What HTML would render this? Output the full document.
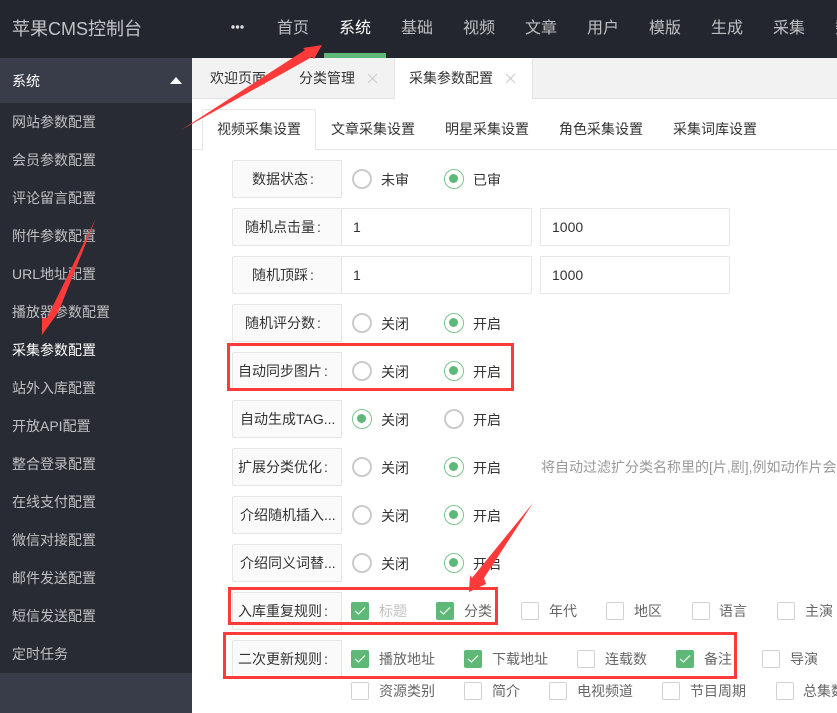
<!DOCTYPE html>
<html lang="zh-CN">
<head>
<meta charset="utf-8">
<title>苹果CMS控制台</title>
<style>
html,body{margin:0;padding:0;width:837px;height:713px;overflow:hidden;background:#fff}
body{position:relative;font-family:"Liberation Sans","Noto Sans CJK SC",sans-serif;font-size:14px;color:#333}
.a,.n,.s,.t,.l,.i,.r,.c,.x,.v,.w{position:absolute;white-space:nowrap}
#hd{position:absolute;left:0;top:0;width:837px;height:58px;background:#23262f;overflow:hidden}
.n{top:0;height:58px;line-height:57px;font-size:16px;color:rgba(255,255,255,.7);width:62px;text-align:center}
#sb{position:absolute;left:0;top:58px;width:192px;height:655px;background:#282b33}
.s{left:12px;line-height:20px;color:rgba(255,255,255,.7)}
.t{line-height:20px;color:#333}
.l{left:232px;width:108px;height:36px;line-height:36px;border:1px solid #e6e6e6;background:#fafafa;text-align:center;border-radius:2px 0 0 2px;color:#333}
.l b{font-weight:normal;display:inline-block;width:12px;padding-left:2px;text-align:left}
.l.e{text-align:left;text-indent:7px}
.i{height:36px;line-height:36px;border:1px solid #e6e6e6;background:#fff;padding-left:11px;box-sizing:content-box;border-radius:0 2px 2px 0;color:#333;font-size:14px}
.r{width:20px;height:20px;box-sizing:border-box;border:2px solid #cbcbcb;border-radius:50%;background:#fff}
.r.on{border:1.5px solid #7cc491}
.r.on:after{content:"";position:absolute;left:4px;top:4px;width:9px;height:9px;border-radius:50%;background:#5fb878}
.v{line-height:20px;color:#666}
.w{line-height:20px;color:#333}
.c{width:16px;height:16px;border:1px solid #d2d2d2;border-radius:2px;background:#fff}
.c.on{background:#5fb878;border-color:#5fb878}
.c.on svg{position:absolute;left:2px;top:3px}
</style>
</head>
<body>
<div id="hd">
  <div class="a" style="left:12px;top:17px;font-size:18px;line-height:24px;color:rgba(255,255,255,.72)">苹果CMS控制台</div>
  <svg class="a" style="left:231px;top:24px" width="13" height="6"><circle cx="2" cy="3" r="1.7" fill="#ddd"/><circle cx="6.500" cy="3" r="1.7" fill="#ddd"/><circle cx="11" cy="3" r="1.7" fill="#ddd"/></svg>
  <div class="n" style="left:262px">首页</div>
  <div class="n" style="left:324px;color:#fff">系统</div>
  <div class="n" style="left:386px">基础</div>
  <div class="n" style="left:448px">视频</div>
  <div class="n" style="left:510px">文章</div>
  <div class="n" style="left:572px">用户</div>
  <div class="n" style="left:634px">模版</div>
  <div class="n" style="left:696px">生成</div>
  <div class="n" style="left:758px">采集</div>
  <div class="n" style="left:820px">数据</div>
  <div class="a" style="left:324px;top:53px;width:62px;height:5px;background:#5fb878"></div>
</div>

<div id="sb">
  <div class="a" style="left:0;top:0;width:192px;height:45px;background:#393d49"></div>
  <div class="s" style="top:13px;color:#fff">系统</div>
  <svg class="a" style="left:170px;top:19px" width="12" height="7"><path d="M6 0L12 7H0Z" fill="#fff"/></svg>
  <div class="s" style="top:54px">网站参数配置</div>
  <div class="s" style="top:92px">会员参数配置</div>
  <div class="s" style="top:130px">评论留言配置</div>
  <div class="s" style="top:168px">附件参数配置</div>
  <div class="s" style="top:206px">URL地址配置</div>
  <div class="s" style="top:244px">播放器参数配置</div>
  <div class="s" style="top:282px;color:#fff">采集参数配置</div>
  <div class="s" style="top:320px">站外入库配置</div>
  <div class="s" style="top:358px">开放API配置</div>
  <div class="s" style="top:396px">整合登录配置</div>
  <div class="s" style="top:434px">在线支付配置</div>
  <div class="s" style="top:472px">微信对接配置</div>
  <div class="s" style="top:510px">邮件发送配置</div>
  <div class="s" style="top:548px">短信发送配置</div>
  <div class="s" style="top:586px">定时任务</div>
  <div class="a" style="left:0;top:615px;width:192px;height:40px;background:#393d49"></div>
</div>

<div class="a" style="left:192px;top:58px;width:645px;height:40px;background:#f2f2f2;border-bottom:1px solid #e2e2e2"></div>
<div class="a" style="left:394px;top:58px;width:139px;height:41px;background:#fff;border-left:1px solid #e6e6e6;border-right:1px solid #e2e2e2;box-sizing:border-box"></div>
<div class="t" style="left:210px;top:68px">欢迎页面</div>
<div class="t" style="left:299px;top:68px">分类管理</div>
<svg class="a" style="left:367px;top:73px" width="11" height="11"><path d="M1 1L10 10M10 1L1 10" stroke="#cfcfcf" stroke-width="1.2" fill="none"/></svg>
<div class="t" style="left:409px;top:68px">采集参数配置</div>
<svg class="a" style="left:505px;top:73px" width="11" height="11"><path d="M1 1L10 10M10 1L1 10" stroke="#cfcfcf" stroke-width="1.2" fill="none"/></svg>

<div class="a" style="left:192px;top:149px;width:645px;height:1px;background:#e6e6e6"></div>
<div class="a" style="left:202px;top:109px;width:114px;height:41px;background:#fff;border:1px solid #e6e6e6;border-bottom:none;box-sizing:border-box;border-radius:2px 2px 0 0"></div>
<div class="t" style="left:217px;top:119px">视频采集设置</div>
<div class="t" style="left:331px;top:119px">文章采集设置</div>
<div class="t" style="left:445px;top:119px">明星采集设置</div>
<div class="t" style="left:559px;top:119px">角色采集设置</div>
<div class="t" style="left:673px;top:119px">采集词库设置</div>

<div class="l" style="top:160px">数据状态<b>:</b></div>
<div class="r" style="left:352px;top:169px"></div><div class="w" style="left:381px;top:170px">未审</div>
<div class="r on" style="left:444px;top:169px"></div><div class="w" style="left:473px;top:170px">已审</div>

<div class="l" style="top:208px">随机点击量<b>:</b></div>
<div class="i" style="left:341px;top:208px;width:178px">1</div>
<div class="i" style="left:540px;top:208px;width:177px">1000</div>

<div class="l" style="top:256px">随机顶踩<b>:</b></div>
<div class="i" style="left:341px;top:256px;width:178px">1</div>
<div class="i" style="left:540px;top:256px;width:177px">1000</div>

<div class="l" style="top:304px">随机评分数<b>:</b></div>
<div class="r" style="left:352px;top:313px"></div><div class="w" style="left:381px;top:314px">关闭</div>
<div class="r on" style="left:444px;top:313px"></div><div class="w" style="left:473px;top:314px">开启</div>

<div class="l" style="top:352px">自动同步图片<b>:</b></div>
<div class="r" style="left:352px;top:361px"></div><div class="w" style="left:381px;top:362px">关闭</div>
<div class="r on" style="left:444px;top:361px"></div><div class="w" style="left:473px;top:362px">开启</div>

<div class="l e" style="top:400px">自动生成TAG...</div>
<div class="r on" style="left:352px;top:409px"></div><div class="w" style="left:381px;top:410px">关闭</div>
<div class="r" style="left:444px;top:409px"></div><div class="w" style="left:473px;top:410px">开启</div>

<div class="l" style="top:448px">扩展分类优化<b>:</b></div>
<div class="r" style="left:352px;top:457px"></div><div class="w" style="left:381px;top:458px">关闭</div>
<div class="r on" style="left:444px;top:457px"></div><div class="w" style="left:473px;top:458px">开启</div>
<div class="v" style="left:541px;top:457px;color:#999">将自动过滤扩分类名称里的[片,剧],例如动作片会</div>

<div class="l e" style="top:496px">介绍随机插入...</div>
<div class="r" style="left:352px;top:505px"></div><div class="w" style="left:381px;top:506px">关闭</div>
<div class="r on" style="left:444px;top:505px"></div><div class="w" style="left:473px;top:506px">开启</div>

<div class="l e" style="top:544px">介绍同义词替...</div>
<div class="r" style="left:352px;top:553px"></div><div class="w" style="left:381px;top:554px">关闭</div>
<div class="r on" style="left:444px;top:553px"></div><div class="w" style="left:473px;top:554px">开启</div>

<div class="l" style="top:592px">入库重复规则<b>:</b></div>
<div class="c on" style="left:351px;top:602px"><svg width="12" height="10"><path d="M1 5L4.500 8L11 1.500" stroke="#dff3e5" stroke-width="1.3" fill="none"/></svg></div><div class="v" style="left:379px;top:601px;color:#c2c2c2">标题</div>
<div class="c on" style="left:436px;top:602px"><svg width="12" height="10"><path d="M1 5L4.500 8L11 1.500" stroke="#dff3e5" stroke-width="1.3" fill="none"/></svg></div><div class="v" style="left:464px;top:601px">分类</div>
<div class="c" style="left:521px;top:602px"></div><div class="v" style="left:549px;top:601px">年代</div>
<div class="c" style="left:606px;top:602px"></div><div class="v" style="left:634px;top:601px">地区</div>
<div class="c" style="left:692px;top:602px"></div><div class="v" style="left:719px;top:601px">语言</div>
<div class="c" style="left:777px;top:602px"></div><div class="v" style="left:805px;top:601px">主演</div>

<div class="l" style="top:640px">二次更新规则<b>:</b></div>
<div class="c on" style="left:351px;top:650px"><svg width="12" height="10"><path d="M1 5L4.500 8L11 1.500" stroke="#dff3e5" stroke-width="1.3" fill="none"/></svg></div><div class="v" style="left:379px;top:649px">播放地址</div>
<div class="c on" style="left:464px;top:650px"><svg width="12" height="10"><path d="M1 5L4.500 8L11 1.500" stroke="#dff3e5" stroke-width="1.3" fill="none"/></svg></div><div class="v" style="left:492px;top:649px">下载地址</div>
<div class="c" style="left:577px;top:650px"></div><div class="v" style="left:605px;top:649px">连载数</div>
<div class="c on" style="left:676px;top:650px"><svg width="12" height="10"><path d="M1 5L4.500 8L11 1.500" stroke="#dff3e5" stroke-width="1.3" fill="none"/></svg></div><div class="v" style="left:704px;top:649px">备注</div>
<div class="c" style="left:762px;top:650px"></div><div class="v" style="left:790px;top:649px">导演</div>

<div class="c" style="left:351px;top:682px"></div><div class="v" style="left:379px;top:681px">资源类别</div>
<div class="c" style="left:464px;top:682px"></div><div class="v" style="left:492px;top:681px">简介</div>
<div class="c" style="left:549px;top:682px"></div><div class="v" style="left:577px;top:681px">电视频道</div>
<div class="c" style="left:662px;top:682px"></div><div class="v" style="left:690px;top:681px">节目周期</div>
<div class="c" style="left:776px;top:682px"></div><div class="v" style="left:803px;top:681px">总集数</div>

<svg class="a" style="left:0;top:0" width="837" height="713" viewBox="0 0 837 713">
  <g fill="none" stroke="#fd3a3a" stroke-width="3">
    <rect x="228.500" y="344.500" width="284" height="45"/>
    <rect x="229.500" y="588.500" width="267" height="35"/>
    <rect x="224.500" y="633.500" width="511" height="44"/>
  </g>
  <g fill="#fd3a3a">
    <path d="M181 130L305 50L303 48L322 45L314 59L312 57Z"/>
    <path d="M96 218L60 308L57 314L42 335L42 318L47 318Z"/>
    <path d="M533 503L484 578L486 584L469 592L470 575L472 578Z"/>
  </g>
</svg>
</body>
</html>
